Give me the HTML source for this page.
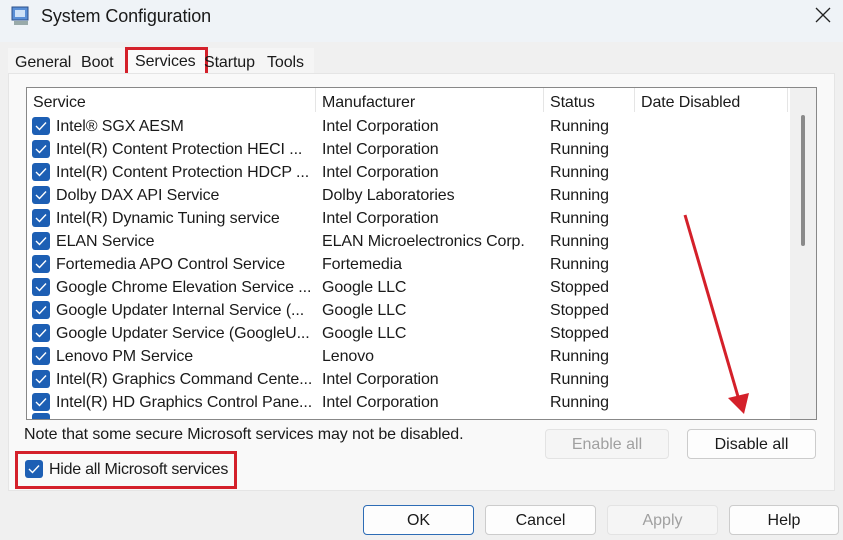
<!DOCTYPE html><html><head><style>
body{margin:0;width:843px;height:540px;background:#f0f0f0;font-family:"Liberation Sans",sans-serif;overflow:hidden;position:relative;color:#1a1a1a}
.a{position:absolute}
.t{font-size:16px;white-space:nowrap;letter-spacing:-0.1px}
.cb{position:absolute;width:18px;height:18px;background:#1d5fb4;border-radius:3px}
.cb svg{position:absolute;left:3px;top:4px}
.btn{position:absolute;height:30px;border:1px solid #ccc;background:#fdfdfd;border-radius:4px;font-size:16px;text-align:center;line-height:30px;box-sizing:border-box}
</style></head><body>
<div class="a" style="left:0;top:0;width:843px;height:34px;background:#eff3f7"></div>
<svg class="a" style="left:10px;top:5px" width="22" height="22"><rect x="2" y="2" width="16" height="13" fill="#5a8fd6" stroke="#2b4f8a"/><rect x="5" y="5" width="10" height="7" fill="#cfe2f7"/><rect x="4" y="16" width="14" height="4" fill="#9aa"/></svg>
<div class="a t" style="left:41px;top:6px;font-size:18px">System Configuration</div>
<svg class="a" style="left:815px;top:7px" width="16" height="16"><path d="M1 1 L15 15 M15 1 L1 15" stroke="#222" stroke-width="1.3"/></svg>
<div class="a" style="left:0;top:34px;width:843px;height:8px;background:#eff3f7"></div>
<div class="a" style="left:8px;top:48px;width:306px;height:26px;background:#f5f5f5"></div>
<div class="a t" style="left:15px;top:54px">General</div>
<div class="a t" style="left:81px;top:54px">Boot</div>
<div class="a" style="left:125px;top:47px;width:77px;height:24px;border:3px solid #d4202a;background:#fafafa"></div>
<div class="a t" style="left:135px;top:53px">Services</div>
<div class="a t" style="left:204px;top:54px">Startup</div>
<div class="a t" style="left:267px;top:54px">Tools</div>
<div class="a" style="left:8px;top:73px;width:827px;height:418px;background:#f9f9f9;border:1px solid #e5e5e5;box-sizing:border-box"></div>
<div class="a" style="left:26px;top:87px;width:791px;height:333px;background:#fff;border:1px solid #888;box-sizing:border-box"></div>
<div class="a" style="left:315px;top:88px;width:1px;height:24px;background:#e5e5e5"></div>
<div class="a" style="left:543px;top:88px;width:1px;height:24px;background:#e5e5e5"></div>
<div class="a" style="left:634px;top:88px;width:1px;height:24px;background:#e5e5e5"></div>
<div class="a" style="left:787px;top:88px;width:1px;height:24px;background:#e5e5e5"></div>
<div class="a" style="left:790px;top:88px;width:26px;height:331px;background:#f0f0f0"></div>
<div class="a" style="left:801px;top:115px;width:4px;height:131px;background:#8a8a8a;border-radius:2px"></div>
<div class="a t" style="left:33px;top:94px">Service</div>
<div class="a t" style="left:322px;top:94px">Manufacturer</div>
<div class="a t" style="left:550px;top:94px">Status</div>
<div class="a t" style="left:641px;top:94px">Date Disabled</div>
<div id="rows"></div>
<div class="a" style="left:27px;top:413px;width:763px;height:6px;overflow:hidden"><div class="cb" style="left:5px;top:0"></div></div>
<script>
var r=[["Intel® SGX AESM","Intel Corporation","Running"],["Intel(R) Content Protection HECI ...","Intel Corporation","Running"],["Intel(R) Content Protection HDCP ...","Intel Corporation","Running"],["Dolby DAX API Service","Dolby Laboratories","Running"],["Intel(R) Dynamic Tuning service","Intel Corporation","Running"],["ELAN Service","ELAN Microelectronics Corp.","Running"],["Fortemedia APO Control Service","Fortemedia","Running"],["Google Chrome Elevation Service ...","Google LLC","Stopped"],["Google Updater Internal Service (...","Google LLC","Stopped"],["Google Updater Service (GoogleU...","Google LLC","Stopped"],["Lenovo PM Service","Lenovo","Running"],["Intel(R) Graphics Command Cente...","Intel Corporation","Running"],["Intel(R) HD Graphics Control Pane...","Intel Corporation","Running"]];
var h="";r.forEach(function(x,i){var y=117+i*23;h+='<div class="cb" style="left:32px;top:'+y+'px"><svg width="12" height="10"><path d="M1 5 L4.5 8.5 L11 1.5" stroke="#fff" stroke-width="1.4" fill="none"/></svg></div><div class="a t" style="left:56px;top:'+(y+1)+'px">'+x[0]+'</div><div class="a t" style="left:322px;top:'+(y+1)+'px">'+x[1]+'</div><div class="a t" style="left:550px;top:'+(y+1)+'px">'+x[2]+'</div>';});
document.getElementById("rows").innerHTML=h;
</script>
<div class="a t" style="left:24px;top:426px">Note that some secure Microsoft services may not be disabled.</div>
<div class="btn" style="left:545px;top:429px;width:124px;color:#a0a0a0;background:#f5f5f5;border-color:#e3e3e3">Enable all</div>
<div class="btn" style="left:687px;top:429px;width:129px">Disable all</div>
<div class="a" style="left:15px;top:451px;width:222px;height:38px;border:3px solid #d4202a;box-sizing:border-box"></div>
<div class="cb" style="left:25px;top:460px"><svg width="12" height="10"><path d="M1 5 L4.5 8.5 L11 1.5" stroke="#fff" stroke-width="1.4" fill="none"/></svg></div>
<div class="a t" style="left:49px;top:461px;letter-spacing:-0.25px">Hide all Microsoft services</div>
<div class="btn" style="left:363px;top:505px;width:111px;border-color:#2d6cb5">OK</div>
<div class="btn" style="left:485px;top:505px;width:111px">Cancel</div>
<div class="btn" style="left:607px;top:505px;width:111px;color:#a0a0a0;background:#f5f5f5;border-color:#e3e3e3">Apply</div>
<div class="btn" style="left:729px;top:505px;width:110px">Help</div>
<svg class="a" style="left:0;top:0" width="843" height="540"><line x1="685" y1="215" x2="739" y2="400" stroke="#d4202a" stroke-width="3"/><polygon points="728,398 744,414 749,393" fill="#d4202a"/></svg>
</body></html>
